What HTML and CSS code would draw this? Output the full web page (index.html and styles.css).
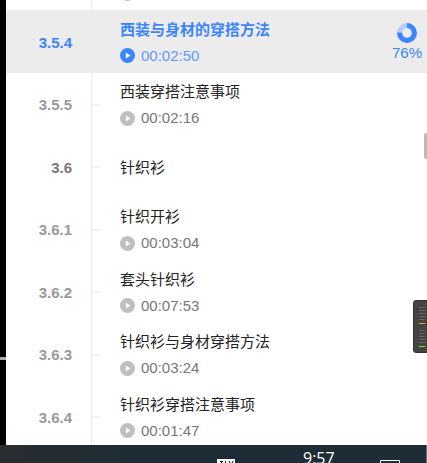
FILE: index.html
```html
<!DOCTYPE html>
<html lang="zh-CN">
<head>
<meta charset="utf-8">
<title>课程目录</title>
<link rel="stylesheet" href="styles.css">
</head>
<body>
<svg class="defs" aria-hidden="true">
  <symbol id="play" viewBox="0 0 15 15">
    <circle cx="7.5" cy="7.5" r="7.5" fill="currentColor"/>
    <path class="play-arrow" d="M5.800 4.500v6l4.700-3z"/>
  </symbol>
</svg>
<main class="screen">
  <div class="player-edge"><span class="edge-mark"></span></div>
  <ol class="lessons">
    <li class="lesson-tail"><svg class="play"><use href="#play"/></svg></li>
    <li class="lesson active">
      <span class="number">3.5.4</span>
      <div class="info"><a class="title" href="#l354">西装与身材的穿搭方法</a><span class="time"><svg class="play"><use href="#play"/></svg>00:02:50</span></div>
      <div class="progress">
        <svg class="ring" viewBox="0 0 20 20" aria-hidden="true">
          <circle class="ring-rest" cx="10" cy="10" r="7.4"/>
          <circle class="ring-done" cx="10" cy="10" r="7.4" pathLength="100" stroke-dasharray="76 24" transform="rotate(-90 10 10)"/>
        </svg>
        <span>76%</span>
      </div>
    </li>
    <li class="lesson">
      <span class="number">3.5.5</span>
      <div class="info"><a class="title" href="#l355">西装穿搭注意事项</a><span class="time"><svg class="play"><use href="#play"/></svg>00:02:16</span></div>
    </li>
    <li class="lesson section">
      <span class="number">3.6</span>
      <div class="info"><a class="title" href="#l36">针织衫</a></div>
    </li>
    <li class="lesson">
      <span class="number">3.6.1</span>
      <div class="info"><a class="title" href="#l361">针织开衫</a><span class="time"><svg class="play"><use href="#play"/></svg>00:03:04</span></div>
    </li>
    <li class="lesson">
      <span class="number">3.6.2</span>
      <div class="info"><a class="title" href="#l362">套头针织衫</a><span class="time"><svg class="play"><use href="#play"/></svg>00:07:53</span></div>
    </li>
    <li class="lesson">
      <span class="number">3.6.3</span>
      <div class="info"><a class="title" href="#l363">针织衫与身材穿搭方法</a><span class="time"><svg class="play"><use href="#play"/></svg>00:03:24</span></div>
    </li>
    <li class="lesson">
      <span class="number">3.6.4</span>
      <div class="info"><a class="title" href="#l364">针织衫穿搭注意事项</a><span class="time"><svg class="play"><use href="#play"/></svg>00:01:47</span></div>
    </li>
  </ol>
  <span class="scroll-thumb"></span>
  <svg class="meter" viewBox="0 0 14 53" aria-hidden="true">
    <path fill="#444" stroke="#333" d="M15 .5H3Q.5.5.5 3v47q0 2.500 2.500 2.500h12z"/>
    <path stroke="#686868" d="M6 7.500h6M6 10.500h6M6 13.500h6M6 16.500h6M6 19.500h6M6 30.500h6M6 33.500h6M6 36.500h6M6 39.500h6M6 42.500h6"/>
    <path stroke="#f0a030" d="M6 23.500h6"/>
    <path stroke="#7fe81c" d="M6 46.500h6"/>
  </svg>
</main>
<footer class="taskbar">
  <svg class="ime" viewBox="0 0 18 4" aria-hidden="true">
    <path fill="#fff" d="M0 0h18v4H0z"/>
    <path fill="none" stroke="#111" d="M3 2.500h3M4.500 2.500V4M8.500 2v2M12 2l1 2M16 2l-1 2"/>
  </svg>
  <time class="clock">9:57</time>
  <svg class="notice" viewBox="0 0 20 3" aria-hidden="true"><path fill="none" stroke="#fff" d="M.5 3V.5h19V3"/></svg>
</footer>
</body>
</html>
```
FILE: styles.css
```css
* {
  box-sizing: border-box;
}

body {
  margin: 0;
  height: 100vh;
  display: grid;
  grid-template-rows: minmax(0, 1fr) 18px;
  overflow: hidden;
  background: #fff;
  font: 15px/20px "Liberation Sans", "Noto Sans CJK SC", sans-serif;
}

.defs {
  position: absolute;
  width: 0;
  height: 0;
}

.screen {
  position: relative;
  display: flex;
  overflow: hidden;
}

.player-edge {
  position: relative;
  width: 6px;
  background: #000;
}

.edge-mark {
  position: absolute;
  top: 357px;
  width: 100%;
  height: 3px;
  background: #aaa;
}

.lessons {
  flex: 1;
  margin: 0;
  padding: 0;
  list-style: none;
  background: linear-gradient(#ebebeb, #ebebeb) 85px 0 / 1px 100% no-repeat;
}

.lesson-tail {
  height: 10px;
  padding-left: 114px;
  overflow: hidden;
  color: #bfbfbf;
}

.lesson-tail .play {
  margin-top: -14px;
}

.lesson {
  display: flex;
  align-items: center;
  height: 62px;
  padding-top: 2px;
  color: #999;
  background: linear-gradient(#f2f2f2, #f2f2f2) 86px 31px / 8px 2px no-repeat;
}

.lesson:nth-child(even) {
  height: 63px;
}

.number {
  width: 66px;
  text-align: right;
  font-weight: bold;
}

.info {
  flex: 1;
  display: grid;
  gap: 6px;
  padding-left: 48px;
}

.title {
  color: #222;
  text-decoration: none;
}

.time {
  display: flex;
  align-items: center;
  gap: 6px;
  color: #777;
}

.play {
  display: block;
  width: 15px;
  height: 15px;
  color: #bfbfbf;
}

.play-arrow {
  fill: #fff;
}

.section .number {
  color: #777;
}

.active,
.active:nth-child(even) {
  background: #ececec;
  color: #3d84ff;
}

.active .title {
  color: #3d84ff;
  font-weight: bold;
}

.active .time {
  color: #6498fa;
}

.active .play {
  color: #3d84ff;
}

.progress {
  display: grid;
  justify-items: center;
  padding-right: 5px;
}

.ring {
  width: 20px;
  height: 20px;
}

.ring circle {
  fill: none;
  stroke-width: 5;
}

.ring .ring-rest {
  stroke: #b4cdf8;
}

.ring .ring-done {
  stroke: #3d84ff;
}

.scroll-thumb {
  position: absolute;
  top: 133px;
  right: 0;
  width: 3px;
  height: 26px;
  border-radius: 2px 0 0 2px;
  background: #bbb;
}

.meter {
  position: absolute;
  top: 300px;
  right: 0;
  width: 14px;
  height: 53px;
}

.taskbar {
  display: grid;
  grid-template-columns: 217px 86px 77px 1fr;
  overflow: hidden;
  background: linear-gradient(90deg, #292d30, #1e2d35 30%, #1e2d35);
  border-right: 1px solid #62717a;
  color: #fff;
}

.ime {
  grid-column: 2;
  width: 18px;
  height: 4px;
  margin-top: 14px;
}

.clock {
  font: 16px/26px "Open Sans", sans-serif;
}

.notice {
  width: 20px;
  height: 3px;
  margin-top: 15px;
}
```
